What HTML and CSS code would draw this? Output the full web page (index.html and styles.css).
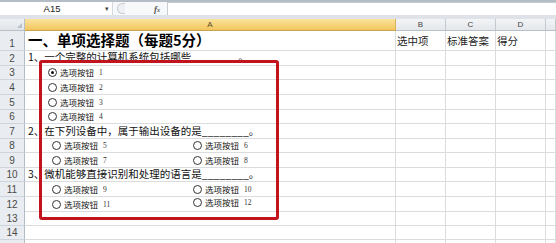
FILE: index.html
```html
<!DOCTYPE html>
<html lang="zh-CN">

<head>
    <meta charset="UTF-8">
    <title>单项选择题</title>
    <link rel="stylesheet" href="styles.css">
</head>

<body>
    <div class="formelbar">
        <div class="navn">A15<span class="pil">▾</span></div>
        <div class="knapper"><span class="knop"></span><span class="fx">f<small>x</small></span></div>
        <div class="input"></div>
    </div>
    <div class="spalte"></div>

    <div class="ark">
        <div class="raekke hoved">
            <div class="hj"><span class="trekant"></span></div>
            <div class="kol valgt">A</div>
            <div class="kol">B</div>
            <div class="kol">C</div>
            <div class="kol">D</div>
            <div class="kol"></div>
        </div>
        <div class="raekke h20">
            <div class="nr">1</div>
            <div class="celle titel">一、单项选择题（每题5分）</div>
            <div class="celle lille">选中项</div>
            <div class="celle lille">标准答案</div>
            <div class="celle lille">得分</div>
            <div class="celle"></div>
        </div>
        <div class="raekke h15">
            <div class="nr">2</div>
            <div class="celle tekst skjult">1、一个完整的计算机系统包括哪些________。</div>
            <div class="celle"></div><div class="celle"></div><div class="celle"></div><div class="celle"></div>
        </div>
        <div class="raekke h14">
            <div class="nr">3</div>
            <div class="celle valg en"><span class="opt"><span class="radio paa"></span>选项按钮<i>1</i></span></div>
            <div class="celle"></div><div class="celle"></div><div class="celle"></div><div class="celle"></div>
        </div>
        <div class="raekke h15">
            <div class="nr">4</div>
            <div class="celle valg en"><span class="opt"><span class="radio"></span>选项按钮<i>2</i></span></div>
            <div class="celle"></div><div class="celle"></div><div class="celle"></div><div class="celle"></div>
        </div>
        <div class="raekke h15">
            <div class="nr">5</div>
            <div class="celle valg en"><span class="opt"><span class="radio"></span>选项按钮<i>3</i></span></div>
            <div class="celle"></div><div class="celle"></div><div class="celle"></div><div class="celle"></div>
        </div>
        <div class="raekke h14">
            <div class="nr">6</div>
            <div class="celle valg en"><span class="opt"><span class="radio"></span>选项按钮<i>4</i></span></div>
            <div class="celle"></div><div class="celle"></div><div class="celle"></div><div class="celle"></div>
        </div>
        <div class="raekke h15">
            <div class="nr">7</div>
            <div class="celle tekst">2、在下列设备中，属于输出设备的是________。</div>
            <div class="celle"></div><div class="celle"></div><div class="celle"></div><div class="celle"></div>
        </div>
        <div class="raekke h14">
            <div class="nr">8</div>
            <div class="celle valg to">
                <span class="opt"><span class="radio"></span>选项按钮<i>5</i></span>
                <span class="opt"><span class="radio"></span>选项按钮<i>6</i></span>
            </div>
            <div class="celle"></div><div class="celle"></div><div class="celle"></div><div class="celle"></div>
        </div>
        <div class="raekke h15">
            <div class="nr">9</div>
            <div class="celle valg to">
                <span class="opt"><span class="radio"></span>选项按钮<i>7</i></span>
                <span class="opt"><span class="radio"></span>选项按钮<i>8</i></span>
            </div>
            <div class="celle"></div><div class="celle"></div><div class="celle"></div><div class="celle"></div>
        </div>
        <div class="raekke h14">
            <div class="nr">10</div>
            <div class="celle tekst">3、微机能够直接识别和处理的语言是________。</div>
            <div class="celle"></div><div class="celle"></div><div class="celle"></div><div class="celle"></div>
        </div>
        <div class="raekke h15">
            <div class="nr">11</div>
            <div class="celle valg to">
                <span class="opt"><span class="radio"></span>选项按钮<i>9</i></span>
                <span class="opt"><span class="radio"></span>选项按钮<i>10</i></span>
            </div>
            <div class="celle"></div><div class="celle"></div><div class="celle"></div><div class="celle"></div>
        </div>
        <div class="raekke h14">
            <div class="nr">12</div>
            <div class="celle valg to">
                <span class="opt"><span class="radio"></span>选项按钮<i>11</i></span>
                <span class="opt hoej"><span class="radio"></span>选项按钮<i>12</i></span>
            </div>
            <div class="celle"></div><div class="celle"></div><div class="celle"></div><div class="celle"></div>
        </div>
        <div class="raekke h15">
            <div class="nr">13</div>
            <div class="celle"></div><div class="celle"></div><div class="celle"></div><div class="celle"></div><div class="celle"></div>
        </div>
        <div class="raekke h14">
            <div class="nr">14</div>
            <div class="celle"></div><div class="celle"></div><div class="celle"></div><div class="celle"></div><div class="celle"></div>
        </div>
        <div class="raekke h14">
            <div class="nr"></div>
            <div class="celle"></div><div class="celle"></div><div class="celle"></div><div class="celle"></div><div class="celle"></div>
        </div>
    </div>

    <div class="ramme"></div>
</body></html>
```

FILE: styles.css
```css
body {
    margin: 0;
    width: 556px;
    height: 243px;
    overflow: hidden;
    position: relative;
    background-color: #fff;
    font-family: "Noto Sans CJK SC", "Liberation Sans", sans-serif;
    color: #111;
}

/* formellinje */
.formelbar {
    display: flex;
    height: 13px;
    border-top: 2px solid #b4bcc6;
    background-color: #fff;
}

.navn {
    position: relative;
    width: 112px;
    font-family: "Liberation Sans", sans-serif;
    font-size: 9.5px;
    line-height: 13px;
    text-align: center;
    padding-right: 8px;
    box-sizing: border-box;
    color: #222;
}

.pil {
    position: absolute;
    right: 3px;
    top: 0;
    font-size: 7px;
    color: #444;
}

.knapper {
    display: flex;
    align-items: center;
    width: 54px;
    border-left: 1px solid #d5dae0;
    background-color: #f7f8fa;
}

.knop {
    width: 7px;
    height: 9px;
    margin-left: 4px;
    border-radius: 6px 0 0 6px;
    border: 1px solid #c9ced5;
    border-right: none;
    background-color: #eef0f3;
}

.fx {
    margin-left: 29px;
    font-family: "Liberation Serif", serif;
    font-style: italic;
    font-weight: bold;
    font-size: 9px;
    color: #555;
}

.fx small {
    font-size: 6px;
}

.input {
    flex: 1;
    border-left: 1px solid #c7ccd3;
    border-top: 1px solid #c7ccd3;
}

.spalte {
    height: 4px;
    background-color: #dfe3e9;
}

/* regneark */
.raekke {
    display: grid;
    grid-template-columns: 25px 371px 50px 50px 50px 1fr;
}

.h20 {
    height: 20px;
}

.h15 {
    height: 15px;
}

.h14 {
    height: 14px;
}

.hoved {
    height: 12px;
}

.hj,
.kol,
.nr,
.celle {
    box-sizing: border-box;
}

.hj {
    position: relative;
    background: linear-gradient(#eef0f3, #e1e5ea);
    border-right: 1px solid #b7bfc9;
    border-bottom: 1px solid #b7bfc9;
}

.trekant {
    position: absolute;
    right: 2px;
    bottom: 2px;
    border-left: 5px solid transparent;
    border-bottom: 5px solid #b9bfc7;
}

.kol {
    background: linear-gradient(#f3f4f6, #e4e7eb);
    border-right: 1px solid #c5cad1;
    border-bottom: 1px solid #b7bfc9;
    font-family: "Liberation Sans", sans-serif;
    font-size: 8px;
    line-height: 11px;
    text-align: center;
    color: #444;
}

.kol.valgt {
    background: linear-gradient(#fbe39a, #f2c65f);
    border-right-color: #d8b05a;
    border-bottom-color: #c9a24d;
    color: #5a4a20;
}

.nr {
    display: flex;
    align-items: flex-end;
    justify-content: center;
    padding-bottom: 1px;
    background-color: #e9ecf0;
    border-right: 1px solid #b3bcc7;
    border-bottom: 1px solid #cfd4da;
    font-family: "Liberation Sans", sans-serif;
    font-size: 10px;
    line-height: 11px;
    color: #4a4a4a;
}

.celle {
    display: flex;
    align-items: flex-end;
    border-right: 1px solid #dadcdf;
    border-bottom: 1px solid #dadcdf;
    white-space: nowrap;
    overflow: visible;
}

.titel {
    padding: 0 0 2px 3px;
    font-size: 14.5px;
    font-weight: bold;
    line-height: 16px;
    color: #000;
}

.lille {
    padding: 0 0 3px 1px;
    font-size: 10.5px;
    line-height: 12px;
    color: #222;
}

.tekst {
    padding: 0 0 1px 3px;
    font-size: 10.5px;
    line-height: 12px;
    color: #111;
}

.tekst.skjult {
    padding-bottom: 2px;
}

/* valgknapper */
.valg {
    padding-bottom: 1px;
    font-size: 8.5px;
    line-height: 11px;
    color: #111;
}

.valg.en {
    padding-left: 23px;
}

.valg.to {
    padding-left: 27px;
}

.opt {
    display: flex;
    align-items: center;
    width: 141px;
}

.opt.hoej {
    margin-bottom: 2px;
}

.radio {
    position: relative;
    width: 9px;
    height: 9px;
    margin-right: 3px;
    border: 1px solid #333;
    border-radius: 50%;
    box-sizing: border-box;
    background-color: #fff;
}

.radio.paa::after {
    content: "";
    position: absolute;
    left: 2px;
    top: 2px;
    width: 3px;
    height: 3px;
    border-radius: 50%;
    background-color: #111;
}

.opt i {
    margin-left: 5px;
    font-family: "Liberation Serif", serif;
    font-style: normal;
    font-size: 7.5px;
    color: #333;
}

/* rød markering */
.ramme {
    position: absolute;
    left: 39px;
    top: 60px;
    width: 240px;
    height: 160px;
    box-sizing: border-box;
    border: 3px solid #c1141f;
    border-radius: 3px;
}
```
